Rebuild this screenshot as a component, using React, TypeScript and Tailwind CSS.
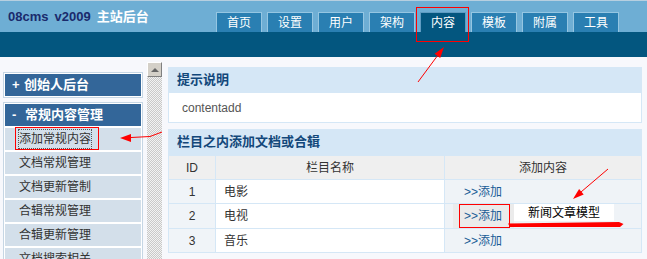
const tabs = ['首页', '设置', '用户', '架构', '内容', '模板', '附属', '工具']
const menu = ['添加常规内容', '文档常规管理', '文档更新管制', '合辑常规管理', '合辑更新管理', '文档搜索相关']
const rows = [
  { id: 1, name: '电影' },
  { id: 2, name: '电视' },
  { id: 3, name: '音乐' },
]

function Marks() {
  // 红色标注（截图上的手绘框和箭头）
  return (
    <svg className="pointer-events-none absolute left-0 top-0" width="647" height="259" viewBox="0 0 647 259">
      <g fill="none" stroke="#ff0000" strokeWidth="1">
        <rect x="416.5" y="7.5" width="52" height="34" />
        <rect x="15.5" y="127.5" width="83" height="22" />
        <rect x="459.5" y="204.5" width="50" height="23" />
        <line x1="418" y1="82" x2="438" y2="55" />
        <polyline points="131,137.5 150,136.5 162,132" />
        <line x1="608" y1="169" x2="581" y2="192" />
      </g>
      <g fill="#ff0000">
        <polygon points="444,47 440.2,57.9 434.6,53.7" />
        <polygon points="120,138 131,134 131,142" />
        <polygon points="573,199 583.7,194.5 579.1,189.1" />
        <polygon points="508,223.5 619,222 623.5,224 620,227 510,227" />
      </g>
    </svg>
  )
}

export default function App() {
  return (
    <div className="relative h-[259px] w-[647px] overflow-hidden bg-[#f7f8fc] font-['Liberation_Sans','Noto_Sans_CJK_SC',sans-serif]">
      {/* 顶部 */}
      <div className="flex h-[32px] border-t border-[#b7cfe0] bg-[#6eaed4]">
        <div className="flex w-[216px] shrink-0 items-center gap-[6px] pl-[8px] text-[13px] font-bold">
          <span className="text-[#1a2a6c]">08cms</span>
          <span className="text-[#1a2a6c]">v2009</span>
          <span className="text-white">主站后台</span>
        </div>
        <div className="flex items-end gap-[5px]">
          {tabs.map((t) => (
            <div
              key={t}
              className={
                t === '内容'
                  ? 'flex h-[20px] w-[46px] items-center justify-center border border-b-0 border-[#5f9cc2] bg-[#03567f] text-[12px] text-white'
                  : 'flex h-[20px] w-[46px] items-center justify-center border border-b-0 border-[#95c6e2] bg-[#2a7fb2] text-[12px] text-white'
              }
            >
              {t}
            </div>
          ))}
        </div>
      </div>
      <div className="h-[25px] bg-[#03567f]" />

      <div className="flex h-[202px]">
        {/* 左侧菜单 */}
        <aside className="ml-[3px] mt-[15px] w-[140px] shrink-0">
          <div className="border border-[#c6d6e4] bg-white p-px">
            <div className="flex h-[22px] items-center bg-[#336699] pl-[7px] text-[13px] font-bold text-white">
              <span className="w-[12px]">+</span>
              <span>创始人后台</span>
            </div>
          </div>
          <div className="mt-[4px] border border-[#c6d6e4] bg-white p-px">
            <div className="flex h-[22px] items-center bg-[#336699] pl-[7px] text-[13px] font-bold text-white">
              <span className="w-[13px]">-</span>
              <span>常规内容管理</span>
            </div>
            {menu.map((m, i) => (
              <div key={m} className="mt-[2px] flex h-[22px] items-center bg-[#d3dfea] pl-[14px] text-[12px] text-[#333]">
                <span className={i === 0 ? 'outline-1 outline-dotted outline-[#555]' : ''}>{m}</span>
              </div>
            ))}
          </div>
        </aside>

        {/* 滚动条 */}
        <div className="ml-[4px] mt-[5px] flex w-[15px] shrink-0 flex-col">
          <div className="flex h-[15px] items-center justify-center border border-b-[#808080] border-l-white border-r-[#808080] border-t-white bg-[#d4d0c8]">
            <div className="h-0 w-0 border-x-[4px] border-b-[4px] border-x-transparent border-b-[#666]" />
          </div>
          <div className="flex-1 bg-[repeating-conic-gradient(#c9c9c9_0%_25%,#f2f2f2_0%_50%)] bg-[length:2px_2px]" />
        </div>

        {/* 主内容 */}
        <main className="ml-[6px] mt-[10px] w-[474px] shrink-0">
          <div className="flex h-[26px] items-center bg-[#d5e7f6] pl-[9px] text-[13px] font-bold text-[#12477a]">提示说明</div>
          <div className="flex h-[30px] items-center border border-t-0 border-[#d5e7f6] bg-white pl-[13px] text-[12px] text-[#555]">
            contentadd
          </div>

          <div className="mt-[6px] flex h-[26px] items-center bg-[#d5e7f6] pl-[9px] text-[13px] font-bold text-[#12477a]">
            栏目之内添加文档或合辑
          </div>
          <table className="w-full table-fixed border-collapse text-[12px] text-[#333]">
            <colgroup>
              <col className="w-[47px]" />
              <col className="w-[229px]" />
              <col />
            </colgroup>
            <thead>
              <tr>
                <th className="h-[24px] border border-[#d5e7f6] bg-[#efefef] font-normal">ID</th>
                <th className="h-[24px] border border-[#d5e7f6] bg-[#efefef] font-normal">栏目名称</th>
                <th className="h-[24px] border border-[#d5e7f6] bg-[#efefef] font-normal">添加内容</th>
              </tr>
            </thead>
            <tbody>
              {rows.map((r) => (
                <tr key={r.id}>
                  <td className="h-[24px] border border-[#d5e7f6] bg-[#f0f4f8] text-center">{r.id}</td>
                  <td className="h-[24px] border border-[#d5e7f6] bg-white pl-[8px]">{r.name}</td>
                  {r.id === 2 ? (
                    <td className="h-[24px] border border-[#d5e7f6] bg-[#eff3f7] p-0">
                      <div className="flex h-[24px]">
                        <div className="ml-[8px] flex w-[61px] items-center bg-[#ebebeb] pl-[11px] text-[#1a5c96]">&gt;&gt;添加</div>
                        <div className="flex h-[17px] w-[100px] items-center justify-center bg-white text-black">新闻文章模型</div>
                      </div>
                    </td>
                  ) : (
                    <td className="h-[24px] border border-[#d5e7f6] bg-[#eff3f7] pl-[19px] text-[#1a5c96]">&gt;&gt;添加</td>
                  )}
                </tr>
              ))}
            </tbody>
          </table>
        </main>
      </div>

      <Marks />
    </div>
  )
}
